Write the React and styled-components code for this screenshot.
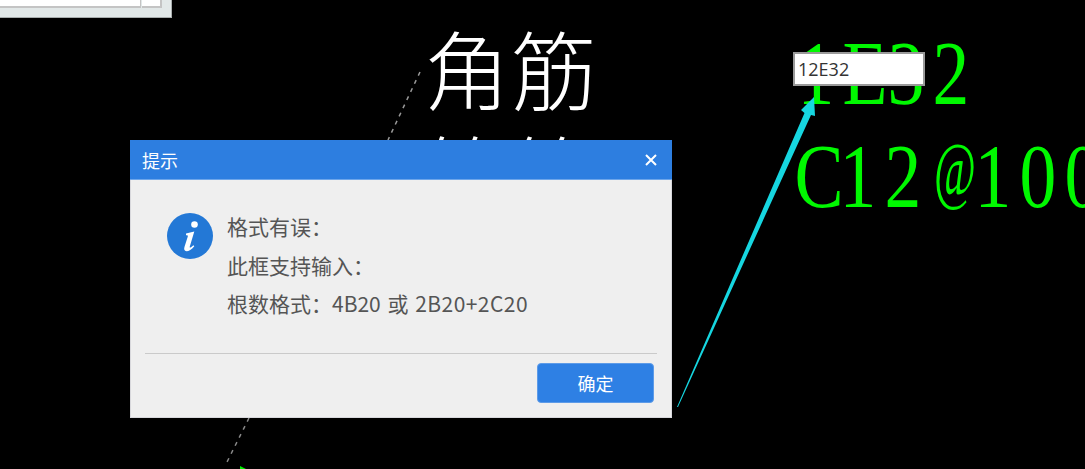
import styled, { createGlobalStyle } from "styled-components"

const GlobalStyle = createGlobalStyle`
    html, body {
        margin: 0;
        padding: 0;
        background: #000;
    }
    #root {
        width: 1085px;
        height: 469px;
    }
`

const Canvas = styled.div`
    position: relative;
    width: 1085px;
    height: 469px;
    overflow: hidden;
    background-color: #000;
    font-family: "Noto Sans CJK SC", "Liberation Sans", sans-serif;
`
const Drawing = styled.svg`
    position: absolute;
    left: 0;
    top: 0;
`
const Panel = styled.div`
    position: absolute;
    left: 0;
    top: -60px;
    width: 172px;
    height: 78px;
    box-sizing: border-box;
    display: flex;
    align-items: flex-end;
    padding-bottom: 9px;
    background-color: #e2e8e8;
    border-right: 1px solid #a8adad;
    border-bottom: 1px solid #a8adad;
`
const PanelList = styled.div`
    width: 141px;
    height: 100%;
    background-color: #fff;
    border-bottom: 2px solid #c4c4c4;
    border-right: 1px solid #c4c4c4;
    box-sizing: border-box;
`
const PanelScroll = styled.div`
    width: 20px;
    height: 100%;
    margin-left: 1px;
    background-color: #fff;
    border-bottom: 2px solid #c4c4c4;
    border-right: 2px solid #c4c4c4;
    box-sizing: border-box;
`
const CjkLabel = styled.div`
    position: absolute;
    left: ${p => p.$x}px;
    top: ${p => p.$y}px;
    color: #fff;
    font-family: "Noto Sans CJK SC", sans-serif;
    font-size: 86px;
    font-weight: 300;
    line-height: 1;
    letter-spacing: 1px;
    white-space: nowrap;
`
const GreenLabel = styled.div`
    position: absolute;
    left: ${p => p.$x}px;
    top: ${p => p.$y}px;
    width: 300px;
    color: #00f800;
    font-family: "Liberation Serif", serif;
    font-size: 92px;
    line-height: 1;
    white-space: nowrap;
`
const Glyph = styled.span`
    display: inline-block;
    width: 45px;
    text-align: center;
    transform: scaleX(0.8);
`
const AtGlyph = styled(Glyph)`
    font-size: 76px;
    vertical-align: 12px;
    transform: scaleX(0.6);
`
const CellInput = styled.input`
    position: absolute;
    left: 793px;
    top: 52px;
    width: 132px;
    height: 34px;
    box-sizing: border-box;
    padding: 0 0 0 3px;
    border: 2px solid #9a9a9a;
    outline: none;
    background-color: #fff;
    color: #333;
    font-family: "Open Sans", "Liberation Sans", sans-serif;
    font-size: 18px;
`
const Dialog = styled.div`
    position: absolute;
    left: 130px;
    top: 140px;
    width: 542px;
    height: 278px;
    box-sizing: border-box;
    display: flex;
    flex-direction: column;
    background-color: #efefef;
    border: 1px solid #d8d8dc;
    border-top: none;
`
const TitleBar = styled.div`
    height: 40px;
    margin: 0 -1px;
    padding: 0 15px 0 12px;
    display: flex;
    align-items: center;
    justify-content: space-between;
    background-color: #2d7ee0;
    border-bottom: 1px solid #6ea6ea;
    box-sizing: border-box;
    color: #fff;
    font-size: 18px;
`
const Body = styled.div`
    display: flex;
    gap: 14px;
    padding: 33px 14px 0 36px;
    height: 173px;
    box-sizing: border-box;
`
const Lines = styled.div`
    display: flex;
    flex-direction: column;
    margin-top: -6px;
    color: #555;
    font-size: 21px;
    line-height: 38.5px;
    word-spacing: 2px;
`
const Formula = styled.span`
    letter-spacing: 0.45px;
`
const Footer = styled.div`
    margin: 0 14px;
    flex: 1;
    display: flex;
    align-items: flex-start;
    justify-content: flex-end;
    padding: 9px 3px 0 0;
    border-top: 1px solid #cacaca;
`
const OkButton = styled.button`
    width: 117px;
    height: 40px;
    border: 1px solid #5d9be8;
    border-radius: 4px;
    background-color: #2e80e4;
    color: #fff;
    font-family: inherit;
    font-size: 18px;
    line-height: 1;
    cursor: pointer;
`

function InfoIcon() {
    return (
        <svg width="46" height="46" viewBox="0 0 46 46" style={{ flex: "none" }}>
            <circle cx="23" cy="23" r="23" fill="#2378d6" />
            <circle cx="27.5" cy="11.5" r="3.3" fill="#fff" />
            <path
                d="M19 20.5 L27.3 18.5 L22.8 33.5 C22.4 35 23.4 35.3 26.4 32.3 L27.3 33.2 C23.6 38 19.4 39 17.9 37.6 C16.9 36.7 17.1 35.2 17.6 33.6 L20.8 23.6 C21.1 22.5 20.3 22 19 22.2 Z"
                fill="#fff"
            />
        </svg>
    )
}

function CloseIcon() {
    return (
        <svg width="12" height="12" viewBox="0 0 12 12">
            <path d="M1 1 L11 11 M11 1 L1 11" stroke="#fff" strokeWidth="2" />
        </svg>
    )
}

export default function App() {
    return (
        <>
            <GlobalStyle />
            <Canvas>
                <Panel>
                    <PanelList />
                    <PanelScroll />
                </Panel>

                <CjkLabel $x={424} $y={24}>角筋</CjkLabel>
                <CjkLabel $x={424} $y={129}>箍筋</CjkLabel>
                <GreenLabel $x={793} $y={27}>
                    <Glyph>1</Glyph><Glyph>E</Glyph><Glyph>3</Glyph><Glyph>2</Glyph>
                </GreenLabel>
                <GreenLabel $x={790} $y={130}>
                    <Glyph>C</Glyph><Glyph>1</Glyph><Glyph>2</Glyph><AtGlyph>@</AtGlyph><Glyph>1</Glyph><Glyph>0</Glyph><Glyph>0</Glyph>
                </GreenLabel>

                <Drawing width="1085" height="469" viewBox="0 0 1085 469">
                    <path d="M420 72 L388 140" stroke="#999" strokeWidth="1.5" strokeDasharray="4 5" fill="none" />
                    <path d="M249 418 L225 466" stroke="#888" strokeWidth="1.5" strokeDasharray="4 5" fill="none" />
                    <path d="M240 466 L246 469 L240 469 Z" fill="#00f000" />
                    <path d="M677 407 L804.5 113 L801 110 L814 97 L815 116 L811 115 L678 407 Z" fill="#16d6e0" />
                </Drawing>

                <CellInput readOnly value="12E32" />

                <Dialog>
                    <TitleBar>
                        提示
                        <CloseIcon />
                    </TitleBar>
                    <Body>
                        <InfoIcon />
                        <Lines>
                            <span>格式有误：</span>
                            <span>此框支持输入：</span>
                            <span>根数格式：4B20 或 <Formula>2B20+2C20</Formula></span>
                        </Lines>
                    </Body>
                    <Footer>
                        <OkButton>确定</OkButton>
                    </Footer>
                </Dialog>
            </Canvas>
        </>
    )
}
